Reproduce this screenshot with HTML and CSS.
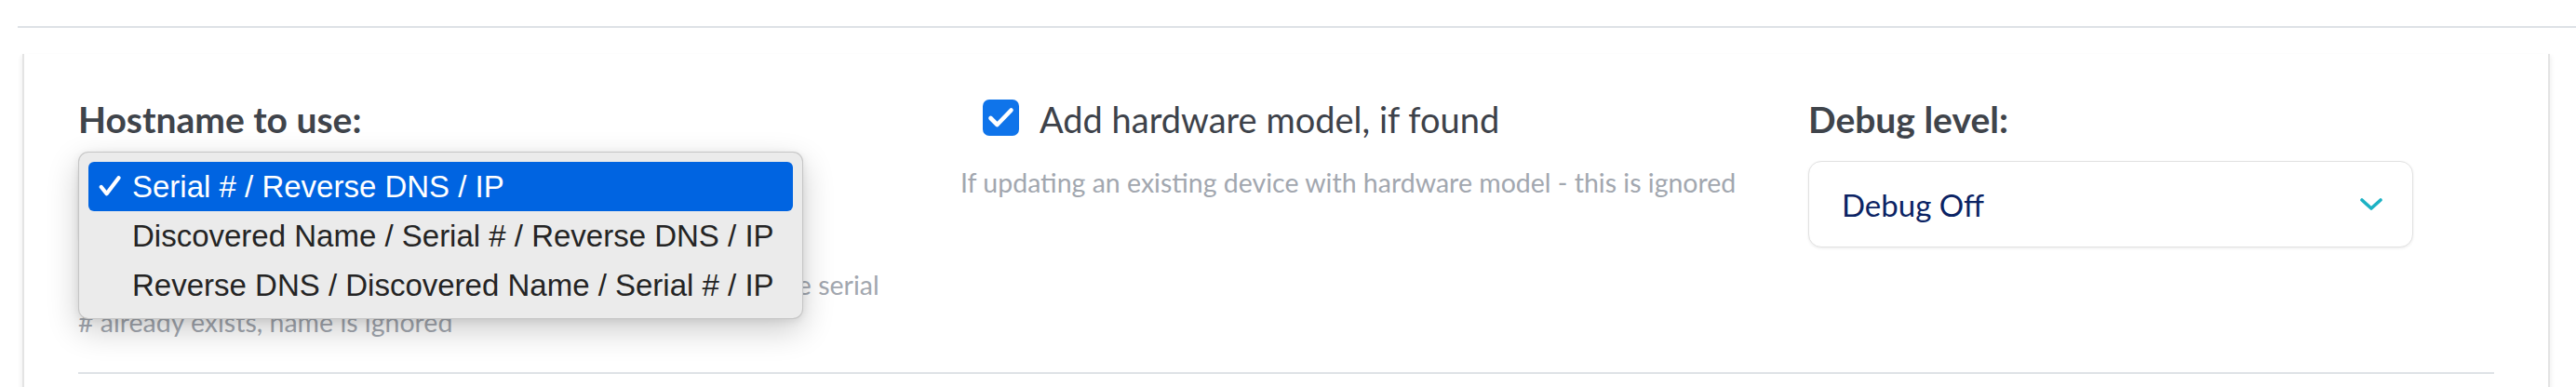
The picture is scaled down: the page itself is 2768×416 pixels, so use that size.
FILE: index.html
```html
<!DOCTYPE html>
<html lang="en">
<head>
<meta charset="utf-8">
<title>Import settings</title>
<link rel="stylesheet" href="styles.css">
</head>
<body>
<div class="topline"></div>
<section class="card">
  <div class="card-body">
    <div class="row">
      <div class="col col-host">
        <div class="field-label">Hostname to use:</div>
        <div class="select-wrap">
          <div class="select select-host">
            <span class="select-value">Serial # / Reverse DNS / IP</span>
            <svg class="chevron" width="24" height="14" viewBox="0 0 24 14"><path d="M2 2 L12 11 L22 2" fill="none" stroke="#1cb2c4" stroke-width="3.6" stroke-linecap="round" stroke-linejoin="round"/></svg>
          </div>
          <ul class="menu">
            <li class="menu-item selected"><svg class="menu-check" width="24" height="22" viewBox="0 0 24 22"><path d="M2.8 12 L8.6 19.2 L21.5 2.2" fill="none" stroke="#ffffff" stroke-width="4.2" stroke-linecap="round" stroke-linejoin="round"/></svg>Serial # / Reverse DNS / IP</li>
            <li class="menu-item">Discovered Name / Serial # / Reverse DNS / IP</li>
            <li class="menu-item">Reverse DNS / Discovered Name / Serial # / IP</li>
          </ul>
        </div>
        <p class="help help-host">Used as the name for new devices - if any device with the same serial # already exists, name is ignored</p>
      </div>
      <div class="col col-hw">
        <label class="check-row">
          <span class="checkbox"><svg width="39" height="39" viewBox="0 0 39 39"><path d="M8.5 20 L15.5 27 L30.5 11.5" fill="none" stroke="#ffffff" stroke-width="4.6" stroke-linecap="round" stroke-linejoin="round"/></svg></span>
          <span class="check-label">Add hardware model, if found</span>
        </label>
        <p class="help help-hw">If updating an existing device with hardware model - this is ignored</p>
      </div>
      <div class="col col-debug">
        <div class="field-label">Debug level:</div>
        <div class="select">
          <span class="select-value">Debug Off</span>
          <svg class="chevron" width="24" height="14" viewBox="0 0 24 14"><path d="M2 2 L12 11 L22 2" fill="none" stroke="#1cb2c4" stroke-width="3.6" stroke-linecap="round" stroke-linejoin="round"/></svg>
        </div>
      </div>
    </div>
    <div class="divider"></div>
  </div>
</section>
</body>
</html>
```

FILE: styles.css
```css
html, body {
  margin: 0;
  padding: 0;
  background: #ffffff;
}
body {
  font-family: Lato, "Open Sans", sans-serif;
  height: 416px;
  overflow: hidden;
}
.topline {
  margin: 28px 0 0 19px;
  height: 2px;
  background: #dee2e6;
}
.card {
  margin: 28px 28px 0 24px;
  border-left: 2px solid #e4e4e4;
  border-right: 2px solid #e4e4e4;
  box-shadow: -4px 0 4px -2px rgba(0, 0, 0, 0.05), 4px 0 4px -2px rgba(0, 0, 0, 0.05);
  height: 400px;
}
.card-body {
  padding: 47px 58px 0 58px;
}
.row {
  display: grid;
  grid-template-columns: 948px 911px 1fr;
}
.col {
  min-width: 0;
}
.field-label {
  font-size: 39px;
  line-height: 46px;
  font-weight: 700;
  color: #3f444b;
  margin-bottom: 22px;
}
.select-wrap {
  position: relative;
}
.select {
  width: 650px;
  height: 93px;
  box-sizing: border-box;
  border: 1px solid #e2e2e2;
  border-radius: 14px;
  box-shadow: 0 1px 3px rgba(0, 0, 0, 0.08);
  background: #ffffff;
  display: flex;
  align-items: center;
  justify-content: space-between;
  padding: 0 32px 0 35px;
}
.select-value {
  font-size: 33px;
  line-height: 40px;
  color: #0b2364;
}
.chevron {
  display: block;
}
.menu {
  position: absolute;
  top: -10px;
  left: 0;
  width: 779px;
  height: 180px;
  box-sizing: border-box;
  margin: 0;
  padding: 10px;
  list-style: none;
  background: #ebebeb;
  border: 1px solid rgba(0, 0, 0, 0.16);
  border-radius: 11px;
  box-shadow: 0 12px 34px rgba(0, 0, 0, 0.2), 0 2px 8px rgba(0, 0, 0, 0.08);
  font-family: "Liberation Sans", Arial, sans-serif;
  font-size: 33px;
  color: #242424;
  z-index: 2;
}
.menu-item {
  height: 53px;
  display: flex;
  align-items: center;
  padding-left: 47px;
  border-radius: 6px;
  white-space: nowrap;
}
.menu-item.selected {
  background: #0064e1;
  color: #ffffff;
  padding-left: 11px;
}
.menu-check {
  display: block;
  margin-right: 12px;
  margin-top: -2px;
  flex: none;
}
.help {
  margin: 0;
  font-size: 28.5px;
  line-height: 40px;
  color: #a2a7af;
}
.help-host {
  margin-top: 20px;
  width: 868px;
}
.help-hw {
  margin-top: 25px;
}
.check-row {
  display: flex;
  align-items: center;
  margin-left: 24px;
  height: 46px;
}
.checkbox {
  width: 39px;
  height: 39px;
  border-radius: 7px;
  background: #0f74ea;
  display: block;
  margin-top: -3px;
  margin-right: 22px;
  flex: none;
}
.checkbox svg {
  display: block;
}
.check-label {
  font-size: 38px;
  line-height: 46px;
  color: #3d424a;
}
.divider {
  margin-top: 34px;
  height: 2px;
  background: #dee2e6;
}
```
